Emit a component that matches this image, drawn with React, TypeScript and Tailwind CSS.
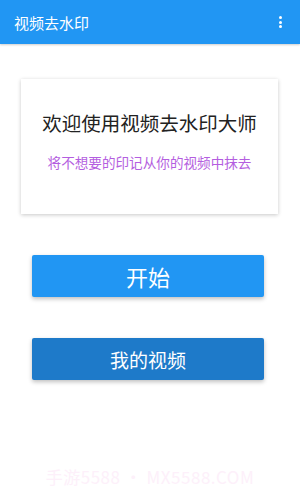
import React from "react";

const font = { fontFamily: '"Noto Sans CJK SC", "Noto Sans", sans-serif' };

export default function App() {
  return (
    <div className="w-[300px] h-[500px] bg-white flex flex-col overflow-hidden" style={font}>
      <div className="h-[44px] bg-[#2196f3] flex items-center justify-between pl-[14px] pr-[18px] shadow-[0_1px_2px_rgba(0,0,0,0.2)]">
        <span className="text-white text-[15px] leading-none">视频去水印</span>
        <div className="flex flex-col gap-[1.5px]">
          <span className="w-[3px] h-[3px] bg-white rounded-full" />
          <span className="w-[3px] h-[3px] bg-white rounded-full" />
          <span className="w-[3px] h-[3px] bg-white rounded-full" />
        </div>
      </div>
      <div className="ml-[21px] mr-[22px] mt-[35px] h-[135px] bg-white shadow-[0_1px_4px_rgba(0,0,0,0.22)] flex flex-col items-center pt-[34px]">
        <span className="text-[19.5px] leading-none text-[#222]">欢迎使用视频去水印大师</span>
        <span className="mt-[23px] text-[13.6px] leading-none text-[#b45ee0]">将不想要的印记从你的视频中抹去</span>
      </div>
      <button className="ml-[32px] mr-[36px] mt-[41px] h-[42px] bg-[#2196f3] rounded-[2px] shadow-[0_2px_4px_rgba(0,0,0,0.25)] text-white text-[22px] leading-none flex items-center justify-center">
        开始
      </button>
      <button className="ml-[32px] mr-[36px] mt-[41px] h-[42px] bg-[#1e7ac9] rounded-[2px] shadow-[0_2px_4px_rgba(0,0,0,0.25)] text-white text-[19px] leading-none flex items-center justify-center">
        我的视频
      </button>
      <div className="mt-[88px] flex justify-center">
        <span className="text-[17px] leading-none tracking-[0.5px] text-[#fdf0fa]">手游5588 • MX5588.COM</span>
      </div>
    </div>
  );
}
